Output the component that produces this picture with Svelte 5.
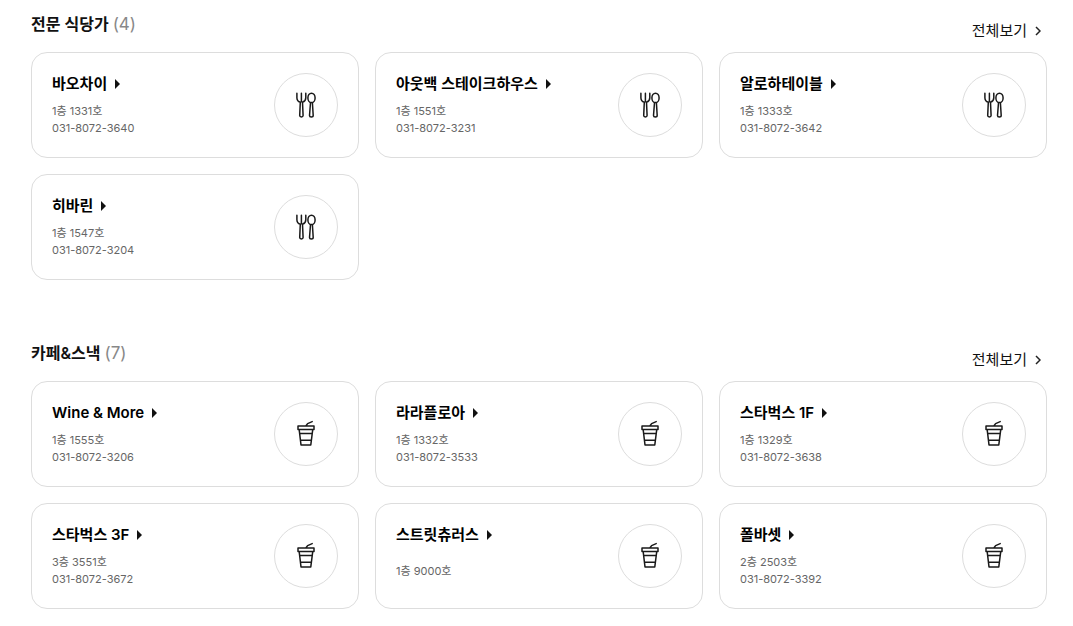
<script>
  const sections = [
    {
      title: '전문 식당가',
      icon: 'dining',
      shops: [
        { name: '바오차이', place: '1층 1331호', phone: '031-8072-3640' },
        { name: '아웃백 스테이크하우스', place: '1층 1551호', phone: '031-8072-3231' },
        { name: '알로하테이블', place: '1층 1333호', phone: '031-8072-3642' },
        { name: '히바린', place: '1층 1547호', phone: '031-8072-3204' }
      ]
    },
    {
      title: '카페&스낵',
      icon: 'cup',
      shops: [
        { name: 'Wine & More', place: '1층 1555호', phone: '031-8072-3206' },
        { name: '라라플로아', place: '1층 1332호', phone: '031-8072-3533' },
        { name: '스타벅스 1F', place: '1층 1329호', phone: '031-8072-3638' },
        { name: '스타벅스 3F', place: '3층 3551호', phone: '031-8072-3672' },
        { name: '스트릿츄러스', place: '1층 9000호', phone: '' },
        { name: '폴바셋', place: '2층 2503호', phone: '031-8072-3392' }
      ],
      total: 7
    }
  ];
</script>

{#snippet icon(kind)}
  <svg class="icon" viewBox="0 0 32 32" aria-hidden="true">
    {#if kind === 'dining'}
      <path d="M6.9 4.3v4.4c0 2.4 1.2 3.8 3.4 4.6L9.7 26.6c0 .9.6 1.4 1.7 1.4s1.7-.5 1.7-1.4l-.6-13.3c2.2-.8 3.3-2.2 3.3-4.6V4.3M11.4 4.3v8.4" />
      <ellipse cx="21.5" cy="8.9" rx="3.6" ry="4.7" />
      <path d="M20.5 13.8l-1 12.7c0 .9.7 1.5 1.8 1.5s1.9-.6 1.9-1.5l-.8-12.7" />
    {:else}
      <path d="M8 8.1h16v3.4H8zM9.2 11.8l1.8 15.1h9.8l1.9-15.1M10 15.4h12.2M11 22.2h10M16 7.7l1.6-2.1 4.6-2" />
    {/if}
  </svg>
{/snippet}

<main>
  {#each sections as section}
    <section>
      <header>
        <h2>{section.title} <span>({section.total ?? section.shops.length})</span></h2>
        <a class="all" href="#all">
          전체보기
          <svg class="chevron" viewBox="0 0 6 10" aria-hidden="true"><path d="M1 1l4 4-4 4" /></svg>
        </a>
      </header>
      <ul>
        {#each section.shops as shop}
          <li>
            <div class="text">
              <h3>
                <a href="#shop">{shop.name}<svg class="arrow" viewBox="0 0 5 10" aria-hidden="true"><path d="M0 0l5 5-5 5z" /></svg></a>
              </h3>
              <div class="info">
                <p>{shop.place}</p>
                {#if shop.phone}<p>{shop.phone}</p>{/if}
              </div>
            </div>
            <div class="badge">{@render icon(section.icon)}</div>
          </li>
        {/each}
      </ul>
    </section>
  {/each}
</main>

<style>
  :global(body) {
    margin: 0;
    background: #fff;
  }
  main {
    display: flex;
    flex-direction: column;
    gap: 49px;
    padding: 0 26px 16px 31px;
    font-family: Inter, 'Noto Sans CJK KR', sans-serif;
    color: #111;
  }
  header {
    display: flex;
    justify-content: space-between;
    height: 52px;
  }
  h2,
  h3,
  p,
  ul {
    margin: 0;
    padding: 0;
  }
  h2 {
    padding-top: 12px;
    font-size: 16px;
    line-height: 24px;
    font-weight: 600;
  }
  h2 span {
    color: #888;
    font-size: 17px;
    font-weight: 400;
  }
  a {
    color: inherit;
    text-decoration: none;
  }
  .all {
    display: flex;
    align-items: center;
    gap: 8px;
    height: 22px;
    padding: 20px 6px 0 0;
    font-size: 15px;
    line-height: 22px;
  }
  .chevron {
    width: 6px;
    height: 10px;
    fill: none;
    stroke: #222;
    stroke-width: 1.5;
  }
  ul {
    display: grid;
    grid-template-columns: repeat(3, minmax(0, 1fr));
    gap: 16px;
    list-style: none;
  }
  li {
    display: flex;
    justify-content: space-between;
    padding: 20px;
    border: 1px solid #ddd;
    border-radius: 16px;
  }
  .text {
    display: flex;
    flex-direction: column;
    gap: 8px;
  }
  h3 {
    font-size: 15px;
    line-height: 22px;
    font-weight: 600;
    color: #000;
  }
  h3 a {
    display: flex;
    align-items: center;
    gap: 8px;
  }
  .arrow {
    width: 5px;
    height: 10px;
    fill: #111;
  }
  .info {
    display: flex;
    flex: 1;
    flex-direction: column;
    justify-content: center;
    font-size: 11px;
    line-height: 17px;
    font-weight: 400;
    color: #666;
  }
  .badge {
    display: flex;
    flex: none;
    align-items: center;
    justify-content: center;
    box-sizing: border-box;
    width: 64px;
    height: 64px;
    border: 1px solid #ddd;
    border-radius: 50%;
  }
  .icon {
    width: 32px;
    height: 32px;
    fill: none;
    stroke: #1a1a1a;
    stroke-width: 1.5;
    stroke-linecap: round;
    stroke-linejoin: round;
  }
</style>
